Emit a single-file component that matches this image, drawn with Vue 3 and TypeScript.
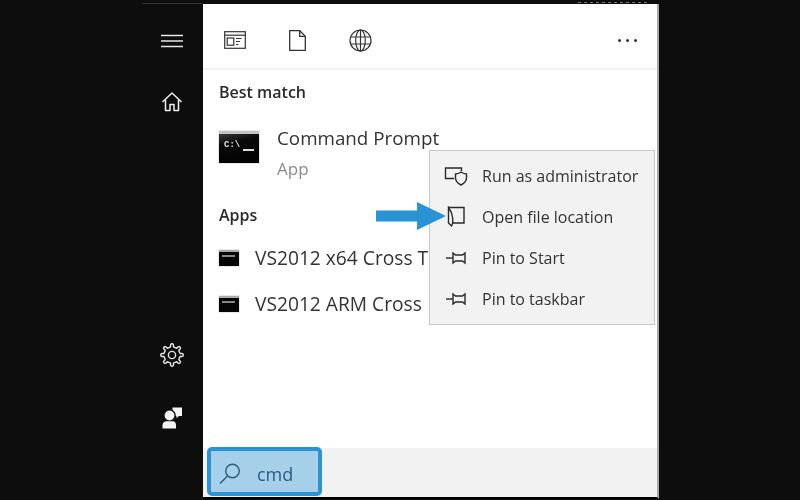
<script setup lang="ts">
interface MenuItem { label: string; icon: 'admin' | 'folder' | 'pin' }
const apps: string[] = ['VS2012 x64 Cross T', 'VS2012 ARM Cross']
const menu: MenuItem[] = [
  { label: 'Run as administrator', icon: 'admin' },
  { label: 'Open file location', icon: 'folder' },
  { label: 'Pin to Start', icon: 'pin' },
  { label: 'Pin to taskbar', icon: 'pin' },
]

function gearPath(): string {
  const teeth = 8
  const cx = 12
  const cy = 12
  const pts: string[] = []
  for (let i = 0; i < teeth; i++) {
    const a = (i / teeth) * Math.PI * 2
    const step = (Math.PI * 2) / teeth
    const p = (r: number, t: number) => `${(cx + r * Math.cos(t)).toFixed(2)} ${(cy + r * Math.sin(t)).toFixed(2)}`
    pts.push(i === 0 ? `M${p(8.3, a - step * 0.22)}` : `L${p(8.3, a - step * 0.22)}`)
    pts.push(`Q${p(11.6, a - step * 0.2)} ${p(11.2, a)}`)
    pts.push(`Q${p(11.6, a + step * 0.2)} ${p(8.3, a + step * 0.22)}`)
    pts.push(`Q${p(7.9, a + step * 0.5)} ${p(8.3, a + step * 0.78)}`)
  }
  return pts.join(' ') + ' Z'
}
const gear = gearPath()
</script>

<template>
  <div class="screen">
    <div class="window">
      <aside class="rail">
        <div class="rail-top">
          <svg width="24" height="14" viewBox="0 0 24 14" fill="none" stroke="#e8e8e8" stroke-width="1.4">
            <path d="M1 1.500h22M1 7h22M1 12.500h22" />
          </svg>
          <svg width="22" height="22" viewBox="0 0 22 22" fill="none" stroke="#eee" stroke-width="1.5" stroke-linejoin="round">
            <path d="M1.500 11 11 2l9.500 9" />
            <path d="M4.500 9v10.500h4.500v-6h4v6h4.500V9" />
          </svg>
        </div>
        <div class="rail-bottom">
          <svg width="24" height="24" viewBox="0 0 24 24" fill="none" stroke="#e8e8e8" stroke-width="1.400" stroke-linejoin="round">
            <path :d="gear" />
            <circle cx="12" cy="12" r="3.600" />
          </svg>
          <svg width="22" height="22" viewBox="0 0 22 22" fill="#f4f4f4">
            <path d="M11.500 .5h9.500v8.500h-3l-2.500 2.200v-2.200h-4z" />
            <circle cx="8.500" cy="8.500" r="5.600" stroke="#0d0d0d" stroke-width="1.400" />
            <path d="M1.500 21.500v-3.500c0-2.300 1.800-3.800 4-3.800h6c2.200 0 3.500 1.500 3.500 3.800v3.500z" />
          </svg>
        </div>
      </aside>

      <main class="panel">
        <div class="dotted-edge"></div>
        <header class="toolbar">
          <div class="filters">
            <svg width="22" height="18" viewBox="0 0 22 18" fill="none" stroke="#333" stroke-width="1.200">
              <rect x=".7" y=".7" width="20.600" height="16.600" />
              <path d="M.7 4.200h20.600" />
              <rect x="3.200" y="7" width="6.600" height="7.200" />
              <path d="M12 7.500h5.500M12 10.500h4M12 13.500h2.500" />
            </svg>
            <svg width="17" height="21" viewBox="0 0 17 21" fill="none" stroke="#333" stroke-width="1.300">
              <path d="M.7.700h10l5.600 5.600v14H.7z" />
              <path d="M10.700.700v5.600h5.600" />
            </svg>
            <svg width="23" height="23" viewBox="0 0 23 23" fill="none" stroke="#333" stroke-width="1.200">
              <circle cx="11.500" cy="11.500" r="10.500" />
              <ellipse cx="11.500" cy="11.500" rx="4.800" ry="10.500" />
              <path d="M2 8h19M2 15h19M11.500 1v21" />
            </svg>
          </div>
          <div class="dots"><i></i><i></i><i></i></div>
        </header>

        <section class="results">
          <h2 class="heading">Best match</h2>
          <div class="best">
            <div class="console console-lg">
              <span class="console-text">C:\</span><span class="console-cursor"></span>
            </div>
            <div class="best-text">
              <div class="best-title">Command Prompt</div>
              <div class="best-sub">App</div>
            </div>
          </div>

          <h2 class="heading apps-heading">Apps</h2>
          <ul class="app-list">
            <li v-for="app in apps" :key="app" class="app-row">
              <span class="console console-sm"><span class="console-dash"></span></span>
              <span class="app-name">{{ app }}</span>
            </li>
          </ul>
        </section>

        <footer class="searchbar">
          <div class="searchbox">
            <svg width="24" height="24" viewBox="0 0 24 24" fill="none" stroke="#2b5c7e" stroke-width="1.400">
              <circle cx="14.500" cy="9" r="6.800" />
              <path d="M9.500 14 2 21.500" />
            </svg>
            <span class="query">cmd</span>
          </div>
        </footer>

        <div class="context-menu">
          <div v-for="item in menu" :key="item.label" class="menu-item">
            <svg class="menu-icon" width="24" height="22" viewBox="0 0 24 22" fill="none" stroke="#2a2a2a" stroke-width="1.400">
              <template v-if="item.icon === 'admin'">
                <path d="M10 13.500H1.500V3h16v3" />
                <path d="M17 7c1.500 1.200 3.500 2 5.500 2v4c0 3.500-2.500 5.500-5.500 7-3-1.500-5.500-3.500-5.500-7V9c2 0 4-.8 5.500-2z" />
              </template>
              <template v-else-if="item.icon === 'folder'">
                <path d="M4.500 1.500H20v15.500H9" />
                <path d="M4.500 1.500V17l3 3c1.500-2 1.500-5 1-9-.3-3-1.500-6-4-9.500z" />
              </template>
              <template v-else>
                <path d="M2 11h7" />
                <path d="M9 6l2.500 2h7L21 6v10l-2.500-2h-7L9 16z" />
              </template>
            </svg>
            <span class="menu-label">{{ item.label }}</span>
          </div>
        </div>

        <svg class="arrow" width="70" height="28" viewBox="0 0 70 28" fill="#2a93d5">
          <path d="M0 8.500h41V0l29 14-29 14V19.500H0z" />
        </svg>
      </main>
    </div>
  </div>
</template>

<style>
html, body { margin: 0; background: #0d0d0d; }
</style>

<style scoped>
.screen {
  width: 800px;
  height: 500px;
  background: #0d0d0d;
  overflow: hidden;
  font-family: "Open Sans", "Noto Sans", sans-serif;
  color: #2b2b2b;
}
.window {
  width: 517px;
  height: 495px;
  margin: 4px 0 0 142px;
  display: flex;
  filter: blur(.4px);
}
.rail {
  width: 61px;
  height: 493px;
  flex: none;
  display: flex;
  flex-direction: column;
  justify-content: space-between;
  align-items: center;
  padding: 30px 2px 68px 0;
  box-sizing: border-box;
  background: #0d0d0d;
  box-shadow: 0 -1px 0 #333;
}
.rail-top { display: flex; flex-direction: column; align-items: center; gap: 43px; }
.rail-bottom { display: flex; flex-direction: column; align-items: center; gap: 40px; }
.panel {
  position: relative;
  width: 456px;
  flex: none;
  box-sizing: border-box;
  background: #fff;
  border-right: 2px solid #a8a8a8;
  border-bottom: 2px solid #000;
  display: flex;
  flex-direction: column;
}
.dotted-edge {
  position: absolute;
  left: 375px;
  top: -2px;
  width: 72px;
  height: 1px;
  background: repeating-linear-gradient(90deg, #777 0 3px, transparent 3px 6px);
}
.toolbar {
  height: 66px;
  flex: none;
  box-sizing: border-box;
  border-bottom: 2px solid #f2f2f2;
  display: flex;
  align-items: center;
  justify-content: space-between;
  padding: 8px 20px 0 21px;
}
.filters { display: flex; align-items: center; gap: 43px; }
.dots { display: flex; gap: 5px; }
.dots i { width: 3px; height: 3px; border-radius: 50%; background: #333; }
.results {
  flex: 1;
  padding: 11px 16px 0;
  overflow: hidden;
}
.heading {
  margin: 0;
  font-size: 16px;
  line-height: 22px;
  font-weight: 600;
  color: #2a2a2a;
}
.best { display: flex; align-items: flex-start; gap: 18px; margin-top: 23px; }
.best-text { margin-top: -1px; }
.best-title { font-size: 18.800px; line-height: 26px; color: #333; }
.best-sub { font-size: 17px; line-height: 24px; margin-top: 6px; color: #8a8a8a; }
.console {
  box-sizing: border-box;
  flex: none;
  position: relative;
  box-shadow: 0 0 1px #777;
}
.console-lg {
  width: 40px;
  height: 32px;
  margin-top: 5px;
  background: linear-gradient(165deg, #3a3a3a 0, #0a0a0a 30%, #000 100%);
  border-top: 3px solid #c4c4c4;
  display: flex;
  align-items: flex-start;
  gap: 3px;
  padding: 5px 0 0 5px;
}
.console-text { color: #e2e2e2; font: 700 9px/12px "Liberation Mono", monospace; }
.console-cursor { width: 11px; height: 2px; background: #ddd; margin-top: 10px; }
.console-sm {
  width: 20px;
  height: 16px;
  background: #050505;
  border-top: 2px solid #aaa;
  display: block;
}
.console-dash { position: absolute; left: 3px; top: 3px; width: 13px; height: 2px; background: #888; }
.apps-heading { margin-top: 23px; }
.app-list { list-style: none; margin: 19px 0 0; padding: 0; display: flex; flex-direction: column; gap: 20px; }
.app-row { display: flex; align-items: center; gap: 16px; height: 26px; white-space: nowrap; }
.app-name { font-size: 19.200px; line-height: 26px; color: #333; }
.searchbar {
  height: 49px;
  background: #f2f2f2;
  flex: none;
  padding: 0 0 0 4px;
}
.searchbox {
  width: 115px;
  height: 49px;
  margin-top: -1px;
  box-sizing: border-box;
  border: 4px solid #2a93d5;
  border-radius: 5px;
  background: #a6cfe9;
  display: flex;
  align-items: center;
  gap: 15px;
  padding: 4px 0 0 7px;
}
.query { font-size: 18px; line-height: 24px; color: #2b5c7e; }
.context-menu {
  position: absolute;
  left: 226px;
  top: 146px;
  width: 226px;
  height: 175px;
  box-sizing: border-box;
  background: #f2f2f2;
  border: 1.500px solid #c8c8c8;
  padding: 4px 0;
  display: flex;
  flex-direction: column;
}
.menu-item { height: 41px; display: flex; align-items: center; padding-left: 14px; gap: 14px; flex: none; }
.menu-icon { flex: none; }
.menu-label { font-size: 16px; color: #333; white-space: nowrap; }
.arrow { position: absolute; left: 173px; top: 198px; }
</style>
